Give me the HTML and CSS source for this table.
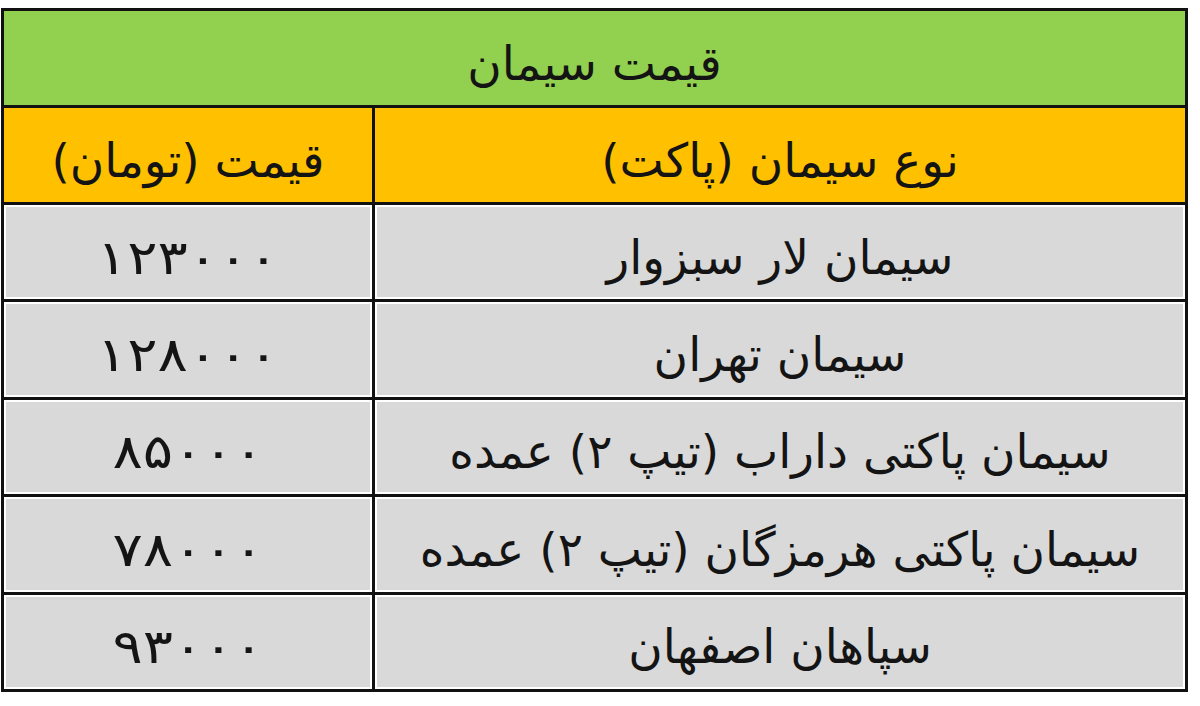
FILE: index.html
```html
<!DOCTYPE html>
<html lang="fa" dir="rtl">
<head>
<meta charset="utf-8">
<title>قیمت سیمان</title>
<link rel="stylesheet" href="styles.css">
</head>
<body>
<table class="price-table">
  <colgroup>
    <col class="name-col">
    <col class="price-col">
  </colgroup>
  <thead>
    <tr class="title-row"><th colspan="2" class="title-cell">قیمت سیمان</th></tr>
    <tr class="head-row">
      <th>نوع سیمان (پاکت)</th>
      <th>قیمت (تومان)</th>
    </tr>
  </thead>
  <tbody>
    <tr><td>سیمان لار سبزوار</td><td class="num"><span>۱۲۳۰۰۰</span></td></tr>
    <tr><td>سیمان تهران</td><td class="num"><span>۱۲۸۰۰۰</span></td></tr>
    <tr><td>سیمان پاکتی داراب (تیپ ۲) عمده</td><td class="num"><span>۸۵۰۰۰</span></td></tr>
    <tr><td>سیمان پاکتی هرمزگان (تیپ ۲) عمده</td><td class="num"><span>۷۸۰۰۰</span></td></tr>
    <tr><td>سپاهان اصفهان</td><td class="num"><span>۹۳۰۰۰</span></td></tr>
  </tbody>
</table>
</body>
</html>
```
FILE: styles.css
```css
html, body {
  margin: 0;
  background: #ffffff;
}
body {
  padding: 8px 12px 0 4px;
  font-family: "DejaVu Sans", sans-serif;
  color: #141414;
}
.price-table {
  width: 1184px;
  height: 684px;
  border-collapse: collapse;
  border: 3px solid #111;
  table-layout: fixed;
}
.name-col {
  width: 813px;
}
.price-col {
  width: 371px;
}
.price-table tr {
  height: 97px;
}
.price-table th,
.price-table td {
  border: 3px solid #111;
  text-align: center;
  vertical-align: middle;
  font-weight: normal;
  font-size: 47px;
  line-height: 1;
  padding: 10px 0 0 0;
  white-space: nowrap;
}
.title-cell {
  background: #92d050;
}
.head-row th {
  background: #ffc000;
}
.price-table tbody td {
  background: #d9d9d9;
  box-shadow: inset 0 0 0 2px #ffffff;
}
.num span {
  display: inline-block;
  transform: scaleX(1.2);
}
```
